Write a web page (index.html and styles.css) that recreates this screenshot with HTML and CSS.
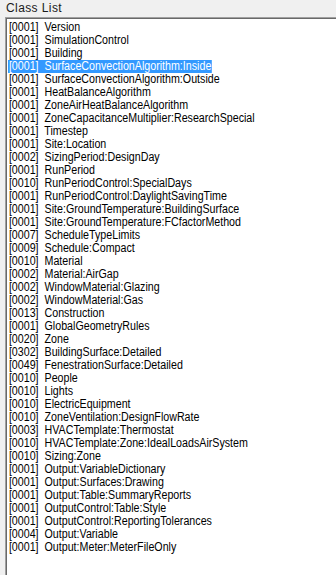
FILE: index.html
```html
<!DOCTYPE html>
<html lang="en">
<head>
    <meta charset="UTF-8">
    <title>Class List</title>
    <link rel="stylesheet" href="styles.css">
</head>
<body>
    <div class="panel">
        <div class="panel-title">Class List</div>
        <!-- elenco classi -->
        <div class="list-box">
            <div class="list-items">
                <div class="item"><span>[0001]&nbsp; Version</span></div>
                <div class="item"><span>[0001]&nbsp; SimulationControl</span></div>
                <div class="item"><span>[0001]&nbsp; Building</span></div>
                <div class="item selected"><span>[0001]&nbsp; SurfaceConvectionAlgorithm:Inside</span></div>
                <div class="item"><span>[0001]&nbsp; SurfaceConvectionAlgorithm:Outside</span></div>
                <div class="item"><span>[0001]&nbsp; HeatBalanceAlgorithm</span></div>
                <div class="item"><span>[0001]&nbsp; ZoneAirHeatBalanceAlgorithm</span></div>
                <div class="item"><span>[0001]&nbsp; ZoneCapacitanceMultiplier:ResearchSpecial</span></div>
                <div class="item"><span>[0001]&nbsp; Timestep</span></div>
                <div class="item"><span>[0001]&nbsp; Site:Location</span></div>
                <div class="item"><span>[0002]&nbsp; SizingPeriod:DesignDay</span></div>
                <div class="item"><span>[0001]&nbsp; RunPeriod</span></div>
                <div class="item"><span>[0010]&nbsp; RunPeriodControl:SpecialDays</span></div>
                <div class="item"><span>[0001]&nbsp; RunPeriodControl:DaylightSavingTime</span></div>
                <div class="item"><span>[0001]&nbsp; Site:GroundTemperature:BuildingSurface</span></div>
                <div class="item"><span>[0001]&nbsp; Site:GroundTemperature:FCfactorMethod</span></div>
                <div class="item"><span>[0007]&nbsp; ScheduleTypeLimits</span></div>
                <div class="item"><span>[0009]&nbsp; Schedule:Compact</span></div>
                <div class="item"><span>[0010]&nbsp; Material</span></div>
                <div class="item"><span>[0002]&nbsp; Material:AirGap</span></div>
                <div class="item"><span>[0002]&nbsp; WindowMaterial:Glazing</span></div>
                <div class="item"><span>[0002]&nbsp; WindowMaterial:Gas</span></div>
                <div class="item"><span>[0013]&nbsp; Construction</span></div>
                <div class="item"><span>[0001]&nbsp; GlobalGeometryRules</span></div>
                <div class="item"><span>[0020]&nbsp; Zone</span></div>
                <div class="item"><span>[0302]&nbsp; BuildingSurface:Detailed</span></div>
                <div class="item"><span>[0049]&nbsp; FenestrationSurface:Detailed</span></div>
                <div class="item"><span>[0010]&nbsp; People</span></div>
                <div class="item"><span>[0010]&nbsp; Lights</span></div>
                <div class="item"><span>[0010]&nbsp; ElectricEquipment</span></div>
                <div class="item"><span>[0010]&nbsp; ZoneVentilation:DesignFlowRate</span></div>
                <div class="item"><span>[0003]&nbsp; HVACTemplate:Thermostat</span></div>
                <div class="item"><span>[0010]&nbsp; HVACTemplate:Zone:IdealLoadsAirSystem</span></div>
                <div class="item"><span>[0010]&nbsp; Sizing:Zone</span></div>
                <div class="item"><span>[0001]&nbsp; Output:VariableDictionary</span></div>
                <div class="item"><span>[0001]&nbsp; Output:Surfaces:Drawing</span></div>
                <div class="item"><span>[0001]&nbsp; Output:Table:SummaryReports</span></div>
                <div class="item"><span>[0001]&nbsp; OutputControl:Table:Style</span></div>
                <div class="item"><span>[0001]&nbsp; OutputControl:ReportingTolerances</span></div>
                <div class="item"><span>[0004]&nbsp; Output:Variable</span></div>
                <div class="item"><span>[0001]&nbsp; Output:Meter:MeterFileOnly</span></div>
            </div>
        </div>
    </div>
</body>
</html>
```

FILE: styles.css
```css
html, body {
    height: 100%;
}
body {
    margin: 0;
    background-color: #f0f0f0;
    font-family: "Liberation Sans", Arial, sans-serif;
    font-size: 12px;
    color: #000;
    overflow: hidden;
}
.panel {
    height: 100%;
    display: flex;
    flex-direction: column;
}
.panel-title {
    padding: 2px 0 0 6px;
    height: 15px;
    line-height: 13px;
    letter-spacing: 0.4px;
    color: #1a1a1a;
}
.list-box {
    flex: 1;
    margin-left: 5px;
    background: #fff;
    border-top: 1px solid #a0a0a0;
    border-left: 1px solid #a0a0a0;
    box-shadow: inset 1px 1px 0 #696969;
    padding: 3px 0 0 2px;
}
/* il font originale e' piu' stretto */
.list-items {
    transform: scaleX(0.89);
    transform-origin: 0 0;
}
.item {
    height: 13px;
    line-height: 13px;
    white-space: nowrap;
}
.item span {
    display: inline-block;
    padding: 0 1px 0 1px;
}
.item.selected span {
    background-color: #3399ff;
    color: #fff;
}
```
